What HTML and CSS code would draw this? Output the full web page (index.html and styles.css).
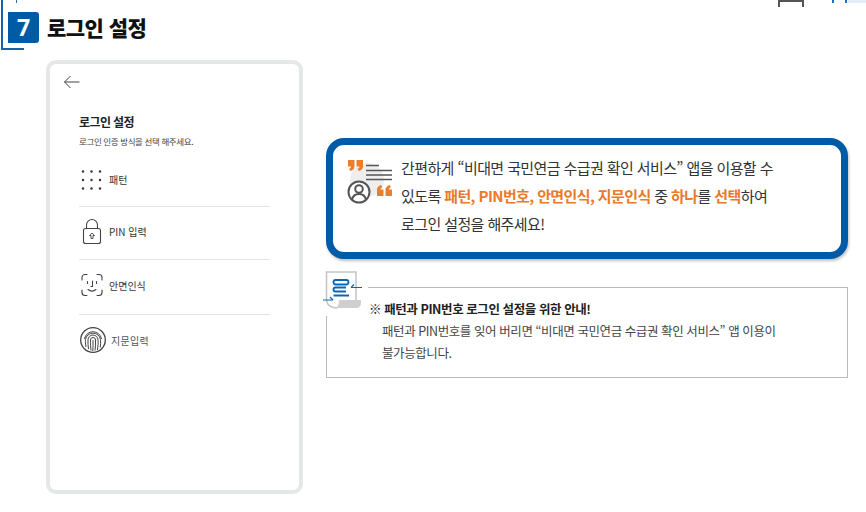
FILE: index.html
```html
<!DOCTYPE html>
<html lang="ko">
<head>
<meta charset="utf-8">
<title>로그인 설정</title>
<link rel="stylesheet" href="styles.css">
</head>
<body>
<div class="page">
  <div class="top-deco">
    <span class="tick-left"></span>
    <span class="bracket"></span>
    <span class="tick-blue t1"></span>
    <span class="tick-blue t2"></span>
    <span class="tint"></span>
  </div>
  <header class="head">
    <div class="num">7</div>
    <h1 class="title">로그인 설정</h1>
  </header>
  <main class="main">
    <section class="phone">
      <svg class="back" width="18" height="14" viewBox="0 0 18 14"><path d="M16.500 7H1.500M7.500 1 1.500 7l6 6" fill="none" stroke="#444" stroke-width="1"/></svg>
      <h2 class="p-title">로그인 설정</h2>
      <p class="p-sub">로그인 인증 방식을 선택 해주세요.</p>
      <ul class="methods">
        <li class="method m1">
          <svg class="m-icon" width="24" height="24" viewBox="0 0 24 24" fill="#333"><circle cx="3" cy="3.500" r="1.200"/><circle cx="11.500" cy="3.500" r="1.200"/><circle cx="20" cy="3.500" r="1.200"/><circle cx="3" cy="12" r="1.200"/><circle cx="11.500" cy="12" r="1.200"/><circle cx="20" cy="12" r="1.200"/><circle cx="3" cy="20.500" r="1.200"/><circle cx="11.500" cy="20.500" r="1.200"/><circle cx="20" cy="20.500" r="1.200"/></svg>
          <span>패턴</span>
        </li>
        <li class="method m2">
          <svg class="m-icon" width="24" height="28" viewBox="0 0 24 28" fill="none" stroke="#444" stroke-width="1.100"><rect x="3.500" y="11.500" width="17" height="15" rx="2"/><path d="M6.500 11.500V8a5.500 5.500 0 0 1 11 0v3.500"/><path d="M12 16l-2.500 2.500h1.500v3h2v-3h1.500z" stroke-width=".9"/></svg>
          <span>PIN 입력</span>
        </li>
        <li class="method m3">
          <svg class="m-icon" width="24" height="24" viewBox="0 0 24 24" fill="none" stroke="#444" stroke-width="1.100" stroke-linecap="round"><path d="M2 7V4.500A3 3 0 0 1 5 1.500h2M17 1.500h2a3 3 0 0 1 3 3V7M2 17v2.500a3 3 0 0 0 3 3h2M22 17v2.500a3 3 0 0 1-3 3h-2"/><path d="M7.500 8.500v2M16.500 8.500v2M12.500 8v5.500h-1.500M8 16.500c2.500 2 5.500 2 8 0"/></svg>
          <span>안면인식</span>
        </li>
        <li class="method m4">
          <svg class="m-icon" width="26" height="26" viewBox="0 0 26 26" fill="none" stroke="#444" stroke-width="1"><circle cx="13" cy="13" r="12.300" stroke-width="1.300"/><path d="M4.500 12a8.600 8.600 0 0 1 17 0M6 20c-.5-3-.8-5-.5-7.500a7.600 7.600 0 0 1 15 0c.3 2.500.2 5-.3 8M8.500 22c-.4-3-.8-6-.5-9a5 5 0 0 1 10 0c.3 3 0 6-.6 10M11 23.500c-.3-3-.7-7-.5-10.500a2.500 2.500 0 0 1 5 0c.3 3.500 0 7-.5 10.500M13 13c0 4 .2 7-.2 11"/></svg>
          <span class="grey">지문입력</span>
        </li>
      </ul>
    </section>
    <div class="side">
      <section class="callout">
        <svg class="callout-icon" width="46" height="46" viewBox="0 0 46 46">
          <circle cx="20" cy="20" r="17" fill="#eeeeee"/>
          <path d="M1 0h6.500v6.500q0 3-4 4.500L2 9q2-.8 2-2.500H1zM9.500 0H16v6.500q0 3-4 4.500l-1.500-2q2-.8 2-2.500h-3z" fill="#e97f2e"/>
          <path d="M19 5.500h13M19 10.500h26M19 15h26M19 19.500h26" stroke="#555" stroke-width="1.500"/>
          <path d="M45 36h-6.500v-6.500q0-3 4-4.500l1.500 2q-2 .8-2 2.500h3zM36.500 36H30v-6.500q0-3 4-4.500l1.500 2q-2 .8-2 2.500h3z" fill="#e97f2e"/>
          <circle cx="12" cy="32" r="10.500" fill="#fff" stroke="#555" stroke-width="2"/>
          <circle cx="12" cy="29" r="3.800" fill="none" stroke="#555" stroke-width="2"/>
          <path d="M5 39.500c1-4 4-5.500 7-5.500s6 1.500 7 5.500" fill="none" stroke="#555" stroke-width="2"/>
        </svg>
        <p class="callout-text">간편하게 “비대면 국민연금 수급권 확인 서비스” 앱을 이용할 수<br>있도록 <b>패턴, PIN번호, 안면인식, 지문인식</b> 중 <b>하나</b>를 <b>선택</b>하여<br>로그인 설정을 해주세요!</p>
      </section>
      <section class="notice">
        <svg class="notice-icon" width="44" height="45" viewBox="0 0 44 45">
          <rect width="44" height="45" fill="#fff"/>
          <path d="M34 30V1H4.500v29q2 7 11 7" fill="none" stroke="#c4c4c4" stroke-width="1.500"/>
          <path d="M17 29h22v2q0 6-5 6H14q3-2 3-8z" fill="#cfcfcf"/>
          <rect x="11.500" y="9" width="15" height="4.500" rx="2.200" fill="none" stroke="#0b66b2" stroke-width="1.800"/>
          <path d="M24 16.500H13.500a2 2 0 0 0 0 4H24M11.500 24.500H27" fill="none" stroke="#0b66b2" stroke-width="1.800"/>
          <path d="M29 16.500h11M32 13.500l-3 3" fill="none" stroke="#0b66b2" stroke-width="1.200"/>
          <path d="M1 29h10M8 26l3 3" fill="none" stroke="#0b66b2" stroke-width="1.200"/>
        </svg>
        <h3 class="notice-title">※ 패턴과 PIN번호 로그인 설정을 위한 안내!</h3>
        <p class="notice-text">패턴과 PIN번호를 잊어 버리면 “비대면 국민연금 수급권 확인 서비스” 앱 이용이<br>불가능합니다.</p>
      </section>
    </div>
  </main>
</div>
</body>
</html>
```
FILE: styles.css
```css
* { box-sizing: border-box; }
html, body { margin: 0; padding: 0; background: #fff; }
body { font-family: "Noto Sans CJK KR", "Noto Sans", sans-serif; color: #333; overflow: hidden; }
.page { position: relative; width: 866px; height: 512px; overflow: hidden; }

.top-deco span { position: absolute; display: block; }
.tick-left { left: 16px; top: 0; width: 1px; height: 3px; background: #2a6fb5; }
.bracket { left: 778px; top: 0; width: 26px; height: 7px; border: 2px solid #555; border-top: 0; border-bottom: 0; }
.bracket::after { content: ""; position: absolute; left: 0; right: 0; top: 0; height: 2px; background: #555; }
.tick-blue { top: 0; width: 2px; height: 3px; background: #1d6fb8; }
.t1 { left: 832px; }
.t2 { left: 845px; }
.tint { left: 848px; top: 0; width: 18px; height: 3px; background: #e4eefa; }

.head { height: 50px; margin-left: 1px; width: 23px; border-left: 2px solid #1464ad; border-bottom: 2px solid #1464ad; display: flex; align-items: flex-start; padding: 12px 0 0 5px; }
.num { flex: none; width: 31px; height: 31px; background: #005ba6; color: #fff; font: 700 23px/31px "Open Sans", sans-serif; text-align: center; border-radius: 0 3px 3px 0; }
.title { flex: none; margin: 0 0 0 8px; font-size: 21px; line-height: 30px; font-weight: 900; color: #111; letter-spacing: -0.55px; white-space: nowrap; }

.main { display: flex; align-items: flex-start; padding: 10px 18px 0 46px; }
.phone { flex: none; width: 257px; height: 434px; border: 4px solid #e6e8e8; border-radius: 10px; padding: 11px 29px 0; background: #fff; }
.back { display: block; margin: 0 0 0 -16px; }
.p-title { margin: 24px 0 0; font-size: 12px; line-height: 18px; font-weight: 700; color: #222; letter-spacing: -0.6px; }
.p-sub { margin: 4px 0 0; font-size: 8.500px; line-height: 12px; color: #444; letter-spacing: -0.38px; }

.methods { list-style: none; margin: 6px 0 0; padding: 0; }
.method { display: flex; align-items: center; gap: 5px; font-size: 10px; color: #333; border-bottom: 1px solid #e4e4e4; }
.method:last-child { border-bottom: 0; }
.m-icon { flex: none; margin-left: 1px; }
.m1 { height: 54px; }
.m2 { height: 53px; padding-bottom: 4px; }
.m3 { height: 55px; padding-bottom: 4px; }
.m4 { height: 54px; padding-bottom: 4px; }
.grey { color: #555; letter-spacing: 0.3px; }

.side { flex: 1; margin-left: 23px; padding-top: 78px; }
.callout { height: 121px; border: 7px solid #005ba6; border-radius: 18px; background: #fff; box-shadow: 1px 2px 3px rgba(0,0,0,.25); display: flex; align-items: flex-start; padding: 9px 0 0 14px; }
.callout-icon { flex: none; margin-top: 6px; }
.callout-text { margin: 0 0 0 8px; font-size: 15px; line-height: 28px; color: #333; letter-spacing: -0.6px; white-space: nowrap; }
.callout-text b { font-weight: 700; color: #ea7a2a; }

.notice { position: relative; margin-top: 28px; height: 91px; border: 1px solid #bbb; border-top-color: transparent; background: #fff; padding: 11px 0 0 42px; }
.notice::before { content: ""; position: absolute; left: 41px; right: -1px; top: -1px; height: 1px; background: #bbb; }
.notice-icon { position: absolute; left: -5px; top: -17px; }
.notice-title { margin: 0; font-size: 12.500px; line-height: 20px; font-weight: 700; color: #222; letter-spacing: -0.42px; }
.notice-text { margin: 1px 0 0 13px; font-size: 12.500px; line-height: 22px; color: #444; letter-spacing: -0.42px; white-space: nowrap; }
```
